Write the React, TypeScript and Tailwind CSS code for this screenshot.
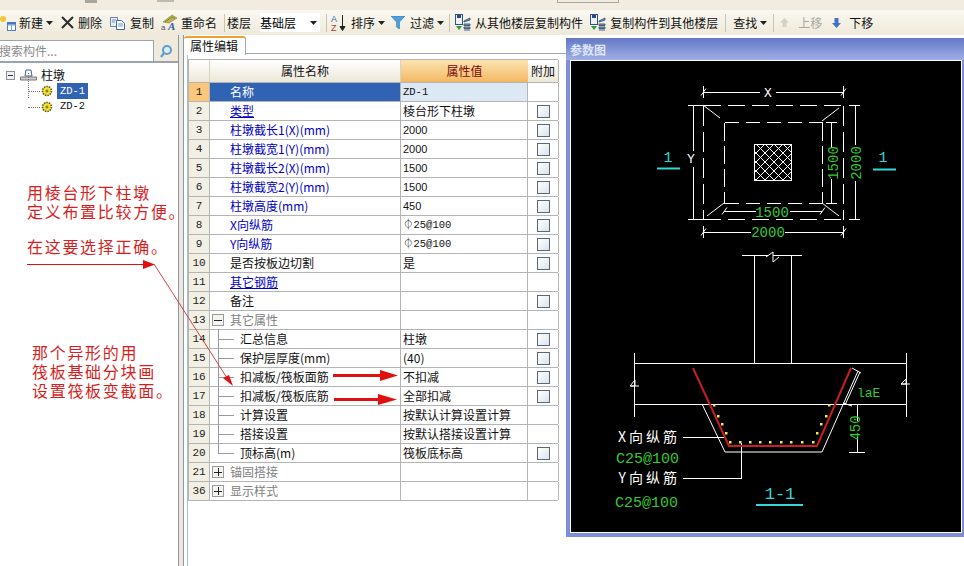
import type { ReactNode } from 'react'

const cjk = { fontFamily: '"Noto Sans CJK SC", "Liberation Sans", sans-serif' }
const mono = '"Liberation Mono", "Noto Sans CJK SC", monospace'

type Row = {
  n: number
  name: string
  value?: string
  check?: boolean
  kind?: 'sel' | 'blue' | 'link' | 'group' | 'child'
  open?: boolean
}

const rows: Row[] = [
  { n: 1, name: '名称', value: 'ZD-1', kind: 'sel' },
  { n: 2, name: '类型', value: '棱台形下柱墩', check: true, kind: 'link' },
  { n: 3, name: '柱墩截长1(X)(mm)', value: '2000', check: true, kind: 'blue' },
  { n: 4, name: '柱墩截宽1(Y)(mm)', value: '2000', check: true, kind: 'blue' },
  { n: 5, name: '柱墩截长2(X)(mm)', value: '1500', check: true, kind: 'blue' },
  { n: 6, name: '柱墩截宽2(Y)(mm)', value: '1500', check: true, kind: 'blue' },
  { n: 7, name: '柱墩高度(mm)', value: '450', check: true, kind: 'blue' },
  { n: 8, name: 'X向纵筋', value: '⏀25@100', check: true, kind: 'blue' },
  { n: 9, name: 'Y向纵筋', value: '⏀25@100', check: true, kind: 'blue' },
  { n: 10, name: '是否按板边切割', value: '是', check: true },
  { n: 11, name: '其它钢筋', kind: 'link' },
  { n: 12, name: '备注', check: true },
  { n: 13, name: '其它属性', kind: 'group', open: true },
  { n: 14, name: '汇总信息', value: '柱墩', check: true, kind: 'child' },
  { n: 15, name: '保护层厚度(mm)', value: '(40)', check: true, kind: 'child' },
  { n: 16, name: '扣减板/筏板面筋', value: '不扣减', check: true, kind: 'child' },
  { n: 17, name: '扣减板/筏板底筋', value: '全部扣减', check: true, kind: 'child' },
  { n: 18, name: '计算设置', value: '按默认计算设置计算', kind: 'child' },
  { n: 19, name: '搭接设置', value: '按默认搭接设置计算', kind: 'child' },
  { n: 20, name: '顶标高(m)', value: '筏板底标高', check: true, kind: 'child' },
  { n: 21, name: '锚固搭接', kind: 'group' },
  { n: 36, name: '显示样式', kind: 'group' },
]

function Caret() {
  return (
    <svg width="7" height="4" viewBox="0 0 7 4" className="shrink-0">
      <path d="M0 0h7L3.5 4z" fill="#222" />
    </svg>
  )
}

function Sep({ className }: { className: string }) {
  return <div className={`w-px h-[18px] bg-[#c9c5b4] shrink-0 ${className}`} />
}

function Tool({ icon, label, caret, className = '', muted }: { icon?: ReactNode; label: string; caret?: boolean; className?: string; muted?: boolean }) {
  return (
    <div className={`flex items-center shrink-0 ${className}`}>
      {icon}
      <span className={`whitespace-nowrap ${muted ? 'text-[#a8a8a0]' : 'text-[#111]'}`}>{label}</span>
      {caret && <span className="ml-[3px] flex"><Caret /></span>}
    </div>
  )
}

const IconNew = () => (
  <svg width="17" height="18" viewBox="0 0 17 18" className="mr-[2px]">
    <circle cx="3" cy="5" r="3" fill="#f2c63a" />
    <rect x="7.5" y="8.5" width="8" height="8" fill="#fff" stroke="#4a7fb8" />
    <path d="M7.5 11h8M11.5 11v5.500" stroke="#7ea6d0" />
    <rect x="7.500" y="8.500" width="8" height="2" fill="#3f78c0" />
  </svg>
)

const IconDelete = () => (
  <svg width="13" height="13" viewBox="0 0 13 13" className="mr-[4px]">
    <path d="M1 1l11 11M12 1L1 12" stroke="#2b2b2b" strokeWidth="2" />
  </svg>
)

const IconCopy = () => (
  <svg width="16" height="14" viewBox="0 0 16 14" className="mr-[4px]">
    <path d="M.5 1.500h7v9h-7z" fill="#e9eef6" stroke="#6d86a8" />
    <path d="M6.500 4.500h5l3 3v6h-8z" fill="#fff" stroke="#3f68a0" />
    <path d="M8 8h5M8 10h5M2 4h4M2 6h3" stroke="#6f93c4" />
  </svg>
)

const IconRename = () => (
  <svg width="17" height="17" viewBox="0 0 17 17" className="mr-[3px]">
    <path d="M2 8L11 1l5 3-8 5z" fill="#c9b04c" stroke="#8d7a30" strokeWidth=".6" />
    <path d="M4 8l7-5 3 1.500" stroke="#4f9a4f" fill="none" />
    <text x="0" y="16" fontSize="8" fill="#555" fontFamily="Liberation Sans">a</text>
    <text x="7" y="16" fontSize="11" fontWeight="700" fontStyle="italic" fill="#2d5f9f" fontFamily="Liberation Serif">A</text>
  </svg>
)

const IconSort = () => (
  <svg width="15" height="18" viewBox="0 0 15 18" className="mr-[5px]">
    <text x="0" y="8" fontSize="9" fill="#3a64a8" fontFamily="Liberation Sans">A</text>
    <text x="0" y="17" fontSize="9" fill="#b03a3a" fontFamily="Liberation Sans">Z</text>
    <path d="M11.500 1v14M9 12.500l2.500 4 2.500-4z" stroke="#222" fill="#222" />
  </svg>
)

const IconFilter = () => (
  <svg width="14" height="13" viewBox="0 0 14 13" className="mr-[5px]">
    <path d="M0 0h14L8.500 6v7l-3-2V6z" fill="#4fa0dc" stroke="#2c78b8" strokeWidth=".6" />
  </svg>
)

const IconFloor = ({ className = '' }: { className?: string }) => (
  <svg width="16" height="17" viewBox="0 0 16 17" className={className}>
    <rect x=".5" y=".5" width="7" height="10" fill="#eef2f8" stroke="#33537f" />
    <rect x="2" y="1" width="4" height="3" fill="#2b4a80" />
    <path d="M1 12h6l-3 4z" fill="#2f9a3a" />
    <path d="M9 7l6-3v2l-6 2zM9 10h6v1.500H9zM9 13h6v1.500H9zM9 16h6" stroke="#44617f" strokeWidth="1" fill="#7f98b0" />
  </svg>
)

const IconUp = () => (
  <svg width="9" height="9" viewBox="0 0 9 9" className="mr-[9px]">
    <path d="M4.500 0L9 4.500H6.500V9h-4V4.500H0z" fill="#d4d2c8" />
  </svg>
)

const IconDown = () => (
  <svg width="9" height="10" viewBox="0 0 9 10" className="mr-[8px]">
    <path d="M2.500 0h4v5H9L4.500 10 0 5h2.500z" fill="#3f72c8" />
  </svg>
)

function Toolbar() {
  return (
    <div className="h-[25px] flex items-center text-[12px] bg-gradient-to-b from-[#faf8f1] to-[#eee9da]">
      <Tool icon={<IconNew />} label="新建" caret />
      <Tool icon={<IconDelete />} label="删除" className="ml-[8px]" />
      <Tool icon={<IconCopy />} label="复制" className="ml-[8px]" />
      <Tool icon={<IconRename />} label="重命名" className="ml-[7px]" />
      <Sep className="ml-[7px]" />
      <Tool label="楼层" className="ml-[2px]" />
      <div className="ml-[9px] w-[60px] h-[19px] bg-white flex items-center justify-between pr-[3px] shrink-0">
        <span>基础层</span>
        <Caret />
      </div>
      <Sep className="ml-[6px]" />
      <Tool icon={<IconSort />} label="排序" caret className="ml-[4px]" />
      <Tool icon={<IconFilter />} label="过滤" caret className="ml-[6px]" />
      <Sep className="ml-[5px]" />
      <Tool icon={<IconFloor className="mr-[4px]" />} label="从其他楼层复制构件" className="ml-[5px]" />
      <Tool icon={<IconFloor className="mr-[4px]" />} label="复制构件到其他楼层" className="ml-[7px]" />
      <Sep className="ml-[7px]" />
      <Tool label="查找" caret className="ml-[7px]" />
      <Sep className="ml-[6px]" />
      <Tool icon={<IconUp />} label="上移" muted className="ml-[6px]" />
      <Tool icon={<IconDown />} label="下移" className="ml-[10px]" />
    </div>
  )
}

function TreeGear() {
  return (
    <svg width="12" height="12" viewBox="0 0 12 12" className="shrink-0">
      <circle cx="6" cy="6" r="4.500" fill="#f4e23a" stroke="#5d5a10" strokeDasharray="1.500 1" strokeWidth="1.600" />
      <circle cx="6" cy="6" r="1.500" fill="#8a8420" />
    </svg>
  )
}

function LeftPanel() {
  return (
    <div className="w-[178px] shrink-0 flex flex-col bg-white">
      <div className="h-[5px] bg-[#efeadb]" />
      <div className="h-[23px] flex bg-[#efeadb] border-b-2 border-[#9aa4ae]">
        <div className="w-[154px] bg-white border-t border-r border-[#9aa4ae] text-[12px] text-[#8a8a8a] leading-[20px] -indent-[1px]">搜索构件...</div>
        <div className="flex-1 flex items-center justify-center">
          <svg width="14" height="14" viewBox="0 0 14 14">
            <circle cx="8" cy="6" r="4" fill="#dcecf8" stroke="#5c9ed0" strokeWidth="2" />
            <path d="M5 9l-3 4" stroke="#5c9ed0" strokeWidth="2.200" />
          </svg>
        </div>
      </div>
      <div className="relative pt-[4px] text-[12px]">
        <div className="h-[16px] flex items-center pl-[6px]">
          <div className="w-[9px] h-[9px] border border-[#8a8f96] bg-[#eef0f2] flex items-center justify-center">
            <div className="w-[5px] h-px bg-[#333]" />
          </div>
          <svg width="17" height="12" viewBox="0 0 17 12" className="ml-[5px]">
            <path d="M6 1h5l1 6H5z" fill="#fff" stroke="#3f5f9f" />
            <path d="M.5 8h16v3H.5z" fill="#cfcfc8" stroke="#77777a" />
          </svg>
          <span className="ml-[4px] text-[#111]">柱墩</span>
        </div>
        <div className="h-[16px] flex items-center pl-[28px]">
          <div className="w-[12px] border-t border-dotted border-[#777]" />
          <div className="ml-[1px]"><TreeGear /></div>
          <span className="ml-[4px] w-[31px] h-[16px] bg-[#3163b5] text-white text-center leading-[16px]" style={{ fontFamily: mono, fontSize: 10.500 }}>ZD-1</span>
        </div>
        <div className="h-[16px] flex items-center pl-[28px]">
          <div className="w-[12px] border-t border-dotted border-[#777]" />
          <div className="ml-[1px]"><TreeGear /></div>
          <span className="ml-[4px] w-[31px] text-[#111] text-center" style={{ fontFamily: mono, fontSize: 10.500 }}>ZD-2</span>
        </div>
        <div className="absolute left-[28px] top-[10px] h-[25px] border-l border-dotted border-[#777]" />
      </div>
    </div>
  )
}

function valueStyle(value?: string) {
  if (!value) return undefined
  if (/^\d+$/.test(value)) return { fontFamily: '"Liberation Sans", sans-serif', fontSize: 11 }
  if (/^[A-Z0-9⏀@-]+$/.test(value)) return { fontFamily: mono, fontSize: 10.500 }
  return undefined
}

function PropertyRow({ row }: { row: Row }) {
  const isSel = row.kind === 'sel'
  const nameColor =
    row.kind === 'blue' || row.kind === 'link' ? 'text-[#0000c8]' : row.kind === 'group' ? 'text-[#808080]' : isSel ? 'text-white' : 'text-[#111]'
  const indent = row.kind === 'child' ? 'pl-[30px]' : 'pl-[20px]'
  return (
    <div className="grid grid-cols-[21px_191px_127px_31px] h-[19px] border-b border-[#b4b4b4] text-[12px]">
      <div className={`border-r border-[#b4b4b4] text-center leading-[18px] text-[#222] ${isSel ? 'bg-[#fcc77c]' : 'bg-[#f2efe4]'}`} style={{ fontFamily: mono, fontSize: 11 }}>
        {row.n}
      </div>
      <div className={`relative border-r border-[#b4b4b4] leading-[18px] whitespace-nowrap ${indent} ${nameColor} ${isSel ? 'bg-[#3163b5]' : ''}`}>
        {row.kind === 'group' && (
          <span className="absolute left-[2px] top-[3px] w-[12px] h-[12px] border border-[#9a9a9a] bg-[#f4f4f0] flex items-center justify-center">
            <span className="relative w-[8px] h-px bg-[#222]">
              {!row.open && <span className="absolute left-[3.500px] -top-[3.500px] w-px h-[8px] bg-[#222]" />}
            </span>
          </span>
        )}
        {row.kind === 'child' && (
          <>
            <span className={`absolute left-[8px] top-0 w-px bg-[#999] ${row.n === 20 ? 'h-[9px]' : 'h-[19px]'}`} />
            <span className="absolute left-[8px] top-[9px] w-[16px] h-px bg-[#999]" />
          </>
        )}
        <span className={row.kind === 'link' ? 'underline' : ''}>{row.name}</span>
      </div>
      <div className={`border-r border-[#b4b4b4] pl-[2px] leading-[18px] text-[#111] whitespace-nowrap ${isSel ? 'bg-[#dde8f5]' : ''}`} style={valueStyle(row.value)}>
        {row.value}
      </div>
      <div className="border-r border-[#b4b4b4] flex items-center justify-center">
        {row.check && <div className="w-[13px] h-[13px] border border-[#55697a] bg-gradient-to-br from-white to-[#dde3ea]" />}
      </div>
    </div>
  )
}

function PropertyPanel() {
  return (
    <div className="w-[382px] shrink-0 flex flex-col">
      <div className="h-[19px] flex items-end">
        <div className="w-[62px] h-[19px] bg-white border-t-2 border-[#f0a030] border-r border-r-[#a0a8b8] rounded-t-[3px] text-[12px] leading-[16px] pl-[6px] text-[#111] -mb-px relative z-10">属性编辑</div>
        <div className="flex-1 border-b border-[#a0a8b8]" />
      </div>
      <div className="flex-1 ml-[3px] border-l border-[#a9bcc8] pt-[5px]">
        <div className="w-[370px] border-t border-l border-[#b4b4b4]">
          <div className="grid grid-cols-[21px_191px_127px_31px] h-[23px] border-b border-[#b4b4b4] text-[12px] leading-[22px] text-center">
            <div className="border-r border-[#d8d4c4] bg-gradient-to-b from-white to-[#ece8d8]" />
            <div className="border-r border-[#d8d4c4] bg-gradient-to-b from-white to-[#ece8d8] text-[#111]">属性名称</div>
            <div className="bg-gradient-to-b from-[#fbe3b0] to-[#f3b860] text-[#7a0a0a]">属性值</div>
            <div className="border-r border-[#b4b4b4] bg-gradient-to-b from-white to-[#ece8d8] text-[#111]">附加</div>
          </div>
          {rows.map((row) => (
            <PropertyRow key={row.n} row={row} />
          ))}
        </div>
      </div>
    </div>
  )
}

function Tick({ x, y }: { x: number; y: number }) {
  return <path d={`M${x - 2.500} ${y + 3.500}L${x + 2.500} ${y - 3.500}`} stroke="#fff" />
}

function Drawing() {
  const dim = { fontFamily: mono, fontSize: 14, fill: '#35c835', textAnchor: 'middle' as const }
  const dots: [number, number][] = [
    [730, 442], [740, 442], [750, 442], [760, 442], [770, 442], [781, 442], [791, 442], [802, 442], [813, 442],
    [714, 405], [718, 416], [722, 424], [726, 433], [829, 405], [826, 416], [821, 424], [817, 433],
  ]
  return (
    <svg viewBox="571 61 390 471" width="390" height="471" className="block">
      <defs>
        <pattern id="hatch" width="9" height="9" patternUnits="userSpaceOnUse">
          <path d="M0 0l9 9M9 0L0 9" stroke="#fff" strokeWidth="1" />
        </pattern>
      </defs>
      <g stroke="#fff" fill="none" shapeRendering="crispEdges">
        <path d="M703.500 105.500h140M703.500 219.500h140" strokeDasharray="17 7" />
        <path d="M703.500 105.500v114M843.500 105.500v114" strokeDasharray="20 6" />
        <path d="M724.500 122.500h98M724.500 203.500h98" strokeDasharray="14 7" />
        <path d="M724.500 122.500v81M822.500 122.500v81" strokeDasharray="18 5" />
        <path d="M703 92.500h57M776 92.500h67M693.500 105v46M693.500 167v52M855.500 105v40M855.500 181v38M831.500 122v26M831.500 179v24" />
        <path d="M724 211.500h32M790 211.500h32M703 232.500h48M785 232.500h58" />
        <path d="M688 105.500h16M688 219.500h16M849 105.500h11M849 219.500h11M826 122.500h11M826 203.500h11" />
        <path d="M703.500 86v12M843.500 86v12M703.500 226v12M843.500 226v12" />
        <rect x="754.500" y="144.500" width="37" height="36" fill="url(#hatch)" />
      </g>
      <g stroke="#fff" fill="none">
        <path d="M703 105l17 13M839 108l-17 13M724 203l-17 13M822 203l17 13" />
        <Tick x={703.500} y={92} />
        <Tick x={843.500} y={92} />
        <Tick x={703.500} y={232} />
        <Tick x={843.500} y={232} />
        <Tick x={724.500} y={211} />
        <Tick x={822.500} y={211} />
        <path d="M742 255.500h60M754.500 255.500V363M791.500 255.500V363" shapeRendering="crispEdges" />
        <path d="M766 257l7-5v10l6-5" fill="#000" />
        <path d="M634.500 353v64M906.500 353v64M634 363.500h273M634 404.500h273" shapeRendering="crispEdges" />
        <path d="M630 386l5-6v6h-5zM631 386h8M901 384l5-5v5zM901 384h9" />
        <path d="M702 404l23 48h97l36-81" />
        <path d="M852 368l9 5M843 403l9 3M860 372l-15 33" />
        <path d="M857.500 404v17M857.500 437v15M849 452.500h16M851 404.500h12" shapeRendering="crispEdges" />
        <path d="M683 437.500h43M683 478.500h58V443" shapeRendering="crispEdges" />
      </g>
      <path d="M693 368l36 78h88l34-78" stroke="#c81e1e" strokeWidth="2" fill="none" />
      {dots.map(([x, y]) => (
        <rect key={`${x}-${y}`} x={x - 1} y={y - 1} width="2.500" height="2.500" fill="#f2ea50" />
      ))}
      <path d="M657 168.500h23M873 169.500h23M756 505h47" stroke="#37d6d6" strokeWidth="2" />
      <g fontFamily={mono} fill="#37d6d6" fontSize="15" textAnchor="middle">
        <text x="668" y="162">1</text>
        <text x="883" y="162">1</text>
        <text x="780" y="499" fontSize="17">1-1</text>
      </g>
      <g fontFamily={mono} fill="#fff" fontSize="13" textAnchor="middle">
        <text x="768" y="97">X</text>
        <text x="691" y="163">Y</text>
      </g>
      <text x="772" y="217" {...dim}>1500</text>
      <text x="768" y="237" {...dim}>2000</text>
      <text x="857" y="397" {...dim} fontSize={13} textAnchor="start">laE</text>
      <text {...dim} transform="translate(838 163) rotate(-90)">1500</text>
      <text {...dim} transform="translate(861 163) rotate(-90)">2000</text>
      <text {...dim} transform="translate(860 428) rotate(-90)">450</text>
      <g fontFamily={mono} fill="#35c835" fontSize="15" textAnchor="end">
        <text x="679" y="463">C25@100</text>
        <text x="678" y="507">C25@100</text>
      </g>
      <g fill="#fff" fontSize="14" textAnchor="end" letterSpacing="3" style={cjk}>
        <text x="680" y="442">X向纵筋</text>
        <text x="680" y="483">Y向纵筋</text>
      </g>
    </svg>
  )
}

function ParamWindow() {
  return (
    <div className="flex-1 pt-[3px]">
      <div className="h-[499px] bg-[#7d8edc] flex flex-col px-[4px] pb-[4px] -mr-[2px]">
        <div className="h-[22px] -mx-[4px] px-[4px] bg-gradient-to-b from-[#6478c4] to-[#a0aee6] text-[12px] font-bold text-[#dfe5f8] leading-[24px]">参数图</div>
        <div className="bg-black border border-white">
          <Drawing />
        </div>
      </div>
    </div>
  )
}

export default function App() {
  return (
    <div className="relative w-[964px] h-[566px] overflow-hidden bg-white flex flex-col" style={cjk}>
      <div className="h-[10px] bg-[#f1ecdf] flex">
        <div className="ml-[85px] w-[12px] h-[3px] bg-[#a9a79e]" />
        <div className="ml-[60px] w-[17px] h-[2px] bg-[#bdbbb0]" />
        <div className="ml-[383px] w-[62px] h-[3px] border border-t-0 border-[#a9a79e]" />
      </div>
      <Toolbar />
      <div className="flex-1 flex min-h-0">
        <LeftPanel />
        <div className="w-[6px] shrink-0 bg-[#ece8dc] border-x border-[#8d98a4]" />
        <PropertyPanel />
        <ParamWindow />
      </div>

      {/* 红色批注 */}
      <div className="absolute left-[27px] top-[183px] text-[16px] leading-[19px] tracking-[1.700px] text-[#d81e1e] whitespace-nowrap">
        <div>用棱台形下柱墩</div>
        <div>定义布置比较方便。</div>
        <div className="mt-[16px]">在这要选择正确。</div>
      </div>
      <div className="absolute left-[32px] top-[343px] text-[16px] leading-[19px] tracking-[1.700px] text-[#d81e1e] whitespace-nowrap">
        <div>那个异形的用</div>
        <div>筏板基础分块画</div>
        <div>设置筏板变截面。</div>
      </div>
      <svg className="absolute left-0 top-0 pointer-events-none" width="964" height="566" viewBox="0 0 964 566">
        <path d="M27 264.500h118" stroke="#e01010" strokeWidth="1" />
        <path d="M143 260l12 4.500-12 4.500z" fill="#e01010" />
        <path d="M154 264l75 117" stroke="#c84848" strokeWidth="1" />
        <path d="M233 386l-10-8 6-3z" fill="#e01010" />
        <path d="M333 375.500h50" stroke="#e01010" strokeWidth="3" />
        <path d="M380 370l18 5.500-18 5.500z" fill="#e01010" />
        <path d="M334 399.500h48" stroke="#e01010" strokeWidth="3" />
        <path d="M378 394l19 5.500-19 5.500z" fill="#e01010" />
      </svg>
    </div>
  )
}
